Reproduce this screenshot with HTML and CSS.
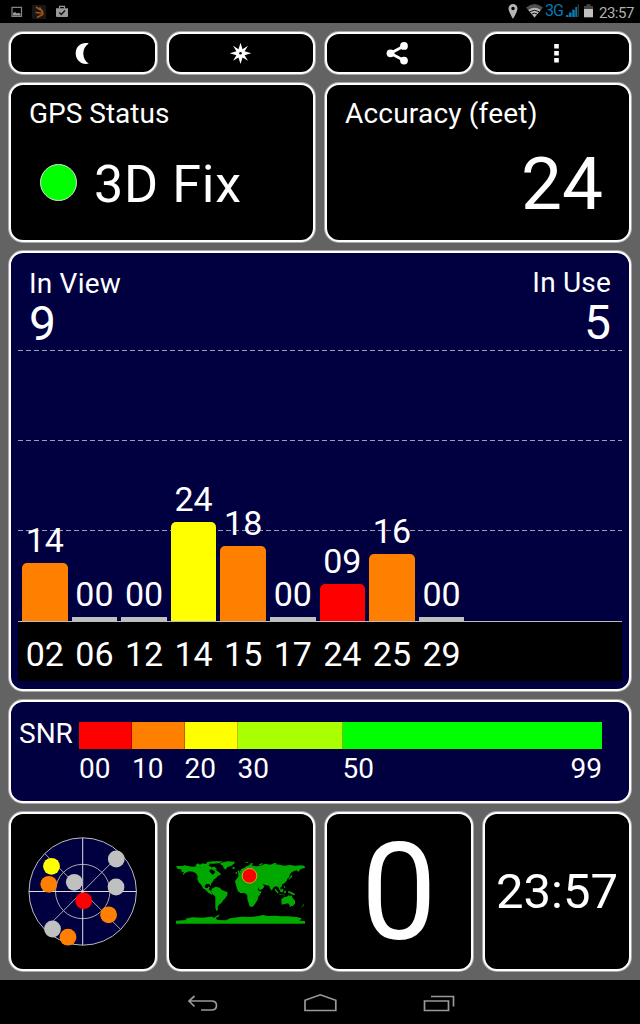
FILE: index.html
```
<!DOCTYPE html>
<html lang="en">
  <head>
    <meta charset="UTF-8" />
    <meta name="viewport" content="width=device-width, initial-scale=1.0" />
    <title>GPS Status</title>
    <link rel="stylesheet" href="styles.css" />
  </head>
  <body>
    <header class="status-bar">
      <svg class="notifications" viewBox="0 0 80 23">
        <path d="M12 7.300h9.500v9H12z" fill="none" stroke="#858585" stroke-width="1.200" />
        <path d="M13 15.500v-2.500l2-1 2 1.500 1.500-.8 2 1v1.800z" fill="#999" />
        <rect x="32" y="5" width="14" height="14" rx="1" fill="#171717" />
        <path d="M36 7l7 4.500M35.500 12.500l8 .8M37 17.500l6.500-3.500M39.500 7.500l3.500 5" fill="none" stroke="#a65312" stroke-width="1.500" />
        <path d="M56 8.300h12v7.700q0 1-1 1H57q-1 0-1-1z" fill="#999" />
        <path d="M59.500 8.500V6.300h5v2.200" fill="none" stroke="#999" stroke-width="1.200" />
        <path d="M59.300 12.500l2 2 3.700-4" fill="none" stroke="#111" stroke-width="1.400" />
      </svg>
      <div class="system">
        <svg class="signals" viewBox="505 0 40 23">
          <path d="M513 4a4.500 4.500 0 0 0-4.500 4.500c0 3.200 4.500 10.300 4.500 10.300s4.500-7.100 4.500-10.300A4.500 4.500 0 0 0 513 4zm0 2.800a1.700 1.700 0 1 1 0 3.400 1.700 1.700 0 0 1 0-3.400z" fill="#b5b5b5" fill-rule="evenodd" />
          <path d="M534.500 17.500L526 7.500q8.500-7 17 0z" fill="#505050" />
          <path d="M534.500 17.500L528.300 10q6.200-4.600 12.400 0z" fill="#b5b5b5" />
          <path d="M530 11.700q4.500-3 9 0M532 14q2.500-1.700 5 0" fill="none" stroke="#151515" stroke-width="1" />
        </svg>
        <span class="network">3G</span>
        <svg class="levels" viewBox="565 0 31 23">
          <path d="M566 15h2.500v2H566zM569 12.500h2.600V17H569zM572.200 9.800h2.600V17h-2.600zM575.300 7h1.700v10h-1.700z" fill="#0878b0" />
          <path d="M577.500 4.500h1.500V17h-1.500z" fill="#333" />
          <path d="M584 6h2.300V4.200h4.400V6h2.300v3.500h-9z" fill="#444" />
          <path d="M584 9h9v8.300h-9z" fill="#c0c0c0" />
        </svg>
        <span class="clock">23:57</span>
      </div>
    </header>

    <main class="dashboard">
      <button class="panel button" aria-label="Night mode">
        <svg viewBox="0 0 144 38">
          <path d="M77.800 9.400C72 7.500 64.700 11 64.700 19.300s7.300 12 13.100 10.100C70.500 25.500 70.500 13.500 77.800 9.400z" />
        </svg>
      </button>
      <button class="panel button" aria-label="Compass">
        <svg viewBox="0 0 144 38">
          <path d="M71.500 8.800l2 6.500 5.500-3.500-3.400 5.500 6.600 2-6.600 2L79 26.800l-5.500-3.400-2 6.600-2-6.600-5.500 3.400 3.400-5.500-6.600-2 6.600-2L64 11.800l5.500 3.500z" />
          <circle cx="71.500" cy="19.300" r="1.300" fill="#000" />
        </svg>
      </button>
      <button class="panel button" aria-label="Share">
        <svg viewBox="0 0 144 38">
          <path d="M77 12L63.500 19.300 77 26.500" fill="none" stroke="#fff" stroke-width="2.800" />
          <circle cx="77" cy="11.900" r="3.900" />
          <circle cx="63.500" cy="19.300" r="3.900" />
          <circle cx="77" cy="26.600" r="3.900" />
        </svg>
      </button>
      <button class="panel button" aria-label="Menu">
        <svg viewBox="0 0 144 38">
          <path d="M69.200 10h4.600v4.600h-4.600zM69.200 17h4.600v4.600h-4.600zM69.200 24h4.600v4.600h-4.600z" />
        </svg>
      </button>

      <section class="panel half fix">
        <h2>GPS Status</h2>
        <div class="fix-value">
          <span class="led"></span>
          <span>3D Fix</span>
        </div>
      </section>
      <section class="panel half accuracy">
        <h2>Accuracy (feet)</h2>
        <div class="accuracy-value">24</div>
      </section>

      <section class="panel full satellites">
        <div class="totals">
          <div class="total">
            <h2>In View</h2>
            <div class="count">9</div>
          </div>
          <div class="total in-use">
            <h2>In Use</h2>
            <div class="count">5</div>
          </div>
        </div>
        <div class="plot">
          <div class="sat"><span>14</span><div class="bar orange" style="height: 58px"></div></div>
          <div class="sat"><span>00</span><div class="bar none"></div></div>
          <div class="sat"><span>00</span><div class="bar none"></div></div>
          <div class="sat"><span>24</span><div class="bar yellow" style="height: 99.500px"></div></div>
          <div class="sat"><span>18</span><div class="bar orange" style="height: 75px"></div></div>
          <div class="sat"><span>00</span><div class="bar none"></div></div>
          <div class="sat"><span>09</span><div class="bar red" style="height: 37px"></div></div>
          <div class="sat"><span>16</span><div class="bar orange" style="height: 67px"></div></div>
          <div class="sat"><span>00</span><div class="bar none"></div></div>
        </div>
        <div class="ids">
          <span>02</span>
          <span>06</span>
          <span>12</span>
          <span>14</span>
          <span>15</span>
          <span>17</span>
          <span>24</span>
          <span>25</span>
          <span>29</span>
        </div>
      </section>

      <section class="panel full snr">
        <h2>SNR</h2>
        <div class="scale">
          <div class="step"><div class="color red"></div><span>00</span></div>
          <div class="step"><div class="color orange"></div><span>10</span></div>
          <div class="step"><div class="color yellow"></div><span>20</span></div>
          <div class="step"><div class="color lime"></div><span>30</span></div>
          <div class="step last"><div class="color green"></div><span>50</span><span>99</span></div>
        </div>
      </section>

      <section class="panel tile">
        <svg viewBox="11 814 144 155">
          <circle cx="82.700" cy="891.500" r="53.700" fill="#000040" stroke="#bbb" />
          <circle cx="82.700" cy="891.500" r="27.200" fill="none" stroke="#aaa" />
          <path d="M44.700 853.500l76 76M44.700 929.500l76-76" stroke="#aaa" />
          <path d="M82.700 838v107M29 891.500h107.500" stroke="#ddd" />
          <circle cx="51.500" cy="866.300" r="8.400" fill="#ff0" />
          <circle cx="48.800" cy="884.300" r="8.400" fill="#ff8000" />
          <circle cx="74.300" cy="882.300" r="8.400" fill="#c0c0c0" />
          <circle cx="116.300" cy="859" r="8.400" fill="#c0c0c0" />
          <circle cx="116" cy="887" r="8.400" fill="#c0c0c0" />
          <circle cx="83.700" cy="900.800" r="8.400" fill="#f00" />
          <circle cx="108.600" cy="914.800" r="8.400" fill="#ff8000" />
          <circle cx="52.500" cy="929" r="8.400" fill="#c0c0c0" />
          <circle cx="68" cy="937.200" r="8.400" fill="#ff8000" />
        </svg>
      </section>
      <section class="panel tile">
        <svg viewBox="12 -78 432 465">
          <g fill="#00a800">
            <path d="M33 78h20l6-2 22 4 16-1 14 4 17-2 9 4-4 9 10 10 8-8-4-8 6 2 12 9 3 5-10 4-4 6-7 4-4 8-4 4-2 8-4-6-9 0-5 6 2 6 6 0 3-4 4 1-2 8 7 4 0 5 6 3-4 3-10-5-9-9-8-5-5-10-8-8-4-9 1-10-5-8-9-5-12-1-12 5-4 5-3-1 4-6-10-3 4-5-14-3z" />
            <path d="M91 76l8-6 6 4 8-4 8 2 6-4 8 5-5 3 9 6 10-2 7 8-6 1 3 7-13-8-12 2-5-5-12 0-6-4-8 1zM123 67l20-3 31 0-10 5-17 2-14 0z" />
            <path d="M166 69l21-5 23 1-3 6-8 6-12 5-5 7-6-5-2-7-8-4zM200 84l6-3 5 3-5 3z" />
            <path d="M144 145l8-5 12 3 7 7 17 7-1 9-6 9-6 5-5 8-8 6-4 7 1 10-5 1-3-8 0-18 0-16-7-7-6-9 4-9z" />
            <path d="M210 124l5-8 5-6 0-7 7-4-3-4 6-9 8-2 6-5 12-5 11 4 7 1 12-1 14-7 16 3 7-3 21 3 12 3 19-2 16 2 16-1 11 1 2 7-13 3-7 9-4-5-9 2-9 5-5 9-1 6-4 2-3 8-6 6-8 5-1 7-5 2 3 8-4-1-5-9-7-2-8 5-3 8-5-5-4-10-8-1-6-2-5-3 5 9-5 6-9 5-5-9 0 8 4 4 7 0-5 10-6 6-1 9-6 10-7 10-7 2-4-2-4-12-3-11 0-9-4-6-6-2-10 1-8-6-3-7z" />
            <path d="M274 172l6-5-1 8-4 5-3-2zM218 93l4-2 2 7 3 3-7 2zM212 97l4-1 0 5-4 0z" />
            <path d="M329 145l6 5 6 8-2 3-8-8zM341 162l13 2 8 0-2 2-17-2zM345 151l6-5 5 3-3 8-7-1zM358 153l5-2-1 8-5 1zM356 135l3 4 3 6-4-1zM369 153l9 2 11 6 1 5-8-2-7-4-5-1zM377 108l5-4-1 7-7 7-5 2 4-5z" />
            <path d="M349 178l9-7 8-1 4-4 7 3 2-5 4 10 7 8 0 9-7 7-7-1-7-7-10 2-9 2zM374 196h4v4h-4zM410 202l4-8 4-1-4 6-8 7z" />
            <path d="M253 72l8-3 4 3-8 4zM281 75l8-5 5 1-9 6zM237 67l15-1-6 3zM322 70l14-2-5 5z" />
            <path d="M33 242l31-2-3-4 21-4 30 1 27-3 9 3 5-4 8-4 3-3-2 7-10 5 5 6 26 1 12-6 35-5 23 1 24-2 17-4 15 3 21-1 21 2 17 0 27 2 15 4-6 7 16 1v8H33z" />
          </g>
          <circle cx="253.500" cy="107.500" r="22" fill="#f00" stroke="#e2a020" stroke-width="3" />
        </svg>
      </section>
      <section class="panel tile speed">0</section>
      <section class="panel tile time">23:57</section>
    </main>

    <nav class="nav-bar">
      <svg viewBox="160 980 320 44">
        <g fill="none" stroke="#999" stroke-width="1.700">
          <path d="M194.500 996l-5.500 5 5.500 5.500M189 1001h22.500q5 0 5 4.500t-5 4.500h-10.500" />
          <path d="M305 1010.500v-10.200l15.300-5.500 15.500 5.500v10.200z" />
          <path d="M424.500 1001h24v9.500h-24zM431 996.500h22.500v10" />
        </g>
      </svg>
    </nav>
  </body>
</html>
```
FILE: styles.css
```
* {
  margin: 0;
  padding: 0;
  box-sizing: border-box;
}

body {
  width: 640px;
  height: 1024px;
  display: flex;
  flex-direction: column;
  background-color: #636363;
  font-family: Roboto, "Liberation Sans", sans-serif;
  color: white;
  overflow: hidden;
}

h2 {
  font-size: 28px;
  line-height: 34px;
  font-weight: 400;
  white-space: nowrap;
}

.status-bar {
  height: 23px;
  display: flex;
  justify-content: space-between;
  background-color: #000;
}

.notifications {
  width: 80px;
  height: 23px;
}

.system {
  display: flex;
  width: 135px;
}

.signals {
  width: 40px;
  height: 23px;
}

.network {
  width: 20px;
  font-size: 16px;
  line-height: 21px;
  letter-spacing: -1px;
  color: #0878b0;
}

.levels {
  width: 31px;
  height: 23px;
}

.clock {
  margin-left: 3px;
  font-size: 15px;
  line-height: 26px;
  letter-spacing: -0.5px;
  color: #b0b0b0;
}

.dashboard {
  height: 957px;
  padding: 9px;
  display: grid;
  grid-template-columns: repeat(4, 148px);
  grid-template-rows: 42px 159px 440px 103px 159px;
  gap: 9px 10px;
}

.panel {
  border: 2px solid #fff;
  border-radius: 14px;
  box-shadow: 0 0 0 1px rgba(255, 255, 255, 0.45);
  background-color: #000;
}

.button svg,
.tile svg {
  display: block;
  width: 100%;
  height: 100%;
  fill: #fff;
}

.half {
  grid-column: span 2;
}

.full {
  grid-column: span 4;
  background-color: #000040;
}

/* fix and accuracy */
.fix {
  padding: 12px 18px;
}

.fix-value {
  display: flex;
  align-items: center;
  gap: 17px;
  margin-top: 24px;
  padding-left: 11px;
  font-size: 52px;
  line-height: 60px;
  letter-spacing: 0.7px;
}

.led {
  width: 37px;
  height: 37px;
  margin-top: -5px;
  border: 1px solid #ddd;
  border-radius: 50%;
  background-color: #0f0;
}

.accuracy {
  padding: 12px 26px 0 18px;
}

.accuracy h2 {
  letter-spacing: 0.2px;
}

.accuracy-value {
  margin-top: 10px;
  font-size: 73px;
  line-height: 86px;
  text-align: right;
}

/* satellite chart */
.satellites {
  padding: 0 7px;
}

.satellites h2 {
  letter-spacing: 0.2px;
}

.totals {
  height: 97px;
  padding: 14px 11px 0;
  display: flex;
  justify-content: space-between;
}

.in-use {
  text-align: right;
  margin-top: -1px;
}

.count {
  margin-top: -1px;
  font-size: 48px;
  line-height: 48px;
}

.plot {
  height: 271px;
  padding-left: 4px;
  display: flex;
  align-items: flex-end;
  gap: 4px;
  background-image: repeating-linear-gradient(90deg, #9c9cb4 0 5px, transparent 5px 8px),
    repeating-linear-gradient(90deg, #9c9cb4 0 5px, transparent 5px 8px),
    repeating-linear-gradient(90deg, #9c9cb4 0 5px, transparent 5px 8px);
  background-size: 100% 1px;
  background-position: 0 0, 0 90px, 0 180px;
  background-repeat: no-repeat;
}

.sat {
  width: 45.6px;
  text-align: center;
  font-size: 34px;
  line-height: 40px;
}

.sat span {
  display: block;
  margin-bottom: 3px;
}

.bar {
  border-radius: 5px 5px 0 0;
}

.none {
  height: 4px;
  border-radius: 0;
  background-color: #c0c0c0;
}

.ids {
  height: 60px;
  padding: 12px 0 0 4px;
  display: flex;
  gap: 4px;
  border-top: 1px solid #bbb;
  background-color: #000;
  font-size: 34px;
  line-height: 40px;
}

.ids span {
  width: 45.6px;
  text-align: center;
}

.red {
  background-color: #f00;
}

.orange {
  background-color: #ff8000;
}

.yellow {
  background-color: #ff0;
}

.lime {
  background-color: #af0;
}

.green {
  background-color: #0f0;
}

/* signal scale */
.snr {
  display: flex;
  padding: 15px 27px 0 8px;
}

.snr h2 {
  width: 60px;
}

.scale {
  flex: 1;
  display: grid;
  grid-template-columns: 53px 52.5px 53px 105px 1fr;
  padding-top: 5px;
  font-size: 28px;
}

.step span {
  display: inline-block;
  line-height: 40px;
}

.color {
  height: 27px;
  border-right: 1px solid rgba(0, 0, 0, 0.25);
}

.last {
  display: grid;
  grid-template-columns: 1fr auto;
  align-content: start;
}

.last .color {
  grid-column: span 2;
  border-right: none;
}

/* bottom tiles */
.tile {
  overflow: hidden;
  text-align: center;
}

.speed {
  font-size: 135px;
  line-height: 158px;
}

.time {
  font-size: 49px;
  line-height: 156px;
}

.nav-bar {
  height: 44px;
  display: flex;
  justify-content: center;
  background-color: #000;
}

.nav-bar svg {
  width: 320px;
  height: 44px;
}
```
